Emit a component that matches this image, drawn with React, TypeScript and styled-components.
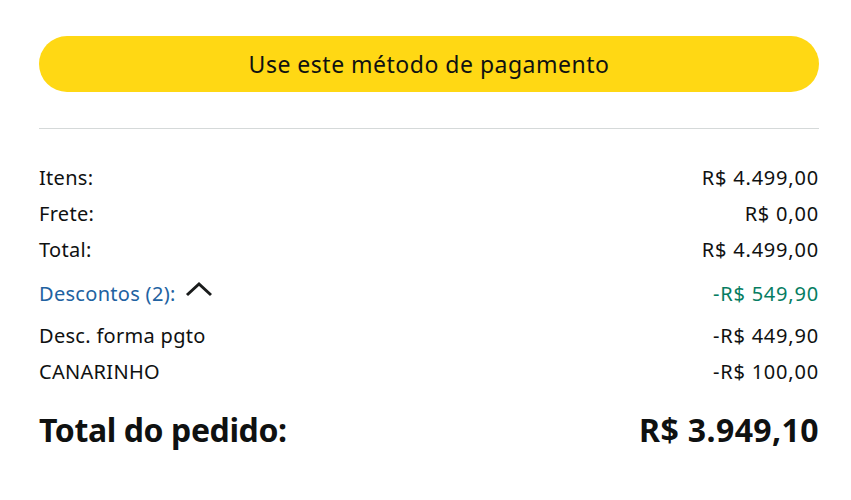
import styled, { createGlobalStyle } from 'styled-components';

const GlobalStyle = createGlobalStyle`
  body {
    margin: 0;
    background: #fff;
    font-family: "Noto Sans", "Open Sans", Arial, sans-serif;
    color: #0f1111;
  }
`;

const Panel = styled.div`
  width: 780px;
  padding: 36px 0 0 39px;
  display: flex;
  flex-direction: column;
`;

const PayButton = styled.button`
  height: 56px;
  width: 100%;
  border: none;
  border-radius: 28px;
  background: #ffd814;
  font-family: inherit;
  font-size: 23px;
  letter-spacing: 0.5px;
  color: #0f1111;
  cursor: pointer;
`;

const Divider = styled.hr`
  border: none;
  border-top: 1px solid #d5d9d9;
  margin: 36px 0 30px;
`;

const Row = styled.div<{ $gap?: number }>`
  display: flex;
  justify-content: space-between;
  align-items: center;
  height: 36px;
  font-size: 20px;
  letter-spacing: 0.3px;
  margin-top: ${({ $gap }) => $gap ?? 0}px;
`;

const Label = styled.span<{ $link?: boolean }>`
  display: flex;
  align-items: center;
  gap: 9px;
  color: ${({ $link }) => ($link ? '#2162a1' : 'inherit')};
`;

const Amount = styled.span<{ $green?: boolean }>`
  letter-spacing: 0.8px;
  color: ${({ $green }) => ($green ? '#067d62' : 'inherit')};
`;

const TotalRow = styled.div`
  display: flex;
  justify-content: space-between;
  align-items: center;
  margin-top: 19px;
  font-size: 32px;
  font-weight: 700;
`;

const TotalLabel = styled.span`
  letter-spacing: -0.4px;
`;

const TotalAmount = styled.span`
  letter-spacing: 0.4px;
`;

const Chevron = () => (
  <svg width="28" height="18" viewBox="0 0 28 18" style={{ marginTop: -6 }}>
    <path d="M2 14 L14 3 L26 14" fill="none" stroke="#1a1c1c" strokeWidth="3" />
  </svg>
);

export default function App() {
  return (
    <>
      <GlobalStyle />
      <Panel>
        <PayButton>Use este método de pagamento</PayButton>
        <Divider />
        <Row>
          <Label>Itens:</Label>
          <Amount>R$ 4.499,00</Amount>
        </Row>
        <Row>
          <Label>Frete:</Label>
          <Amount>R$ 0,00</Amount>
        </Row>
        <Row>
          <Label>Total:</Label>
          <Amount>R$ 4.499,00</Amount>
        </Row>
        <Row $gap={8}>
          <Label $link>
            Descontos (2): <Chevron />
          </Label>
          <Amount $green>-R$ 549,90</Amount>
        </Row>
        <Row $gap={6}>
          <Label>Desc. forma pgto</Label>
          <Amount>-R$ 449,90</Amount>
        </Row>
        <Row>
          <Label>CANARINHO</Label>
          <Amount>-R$ 100,00</Amount>
        </Row>
        <TotalRow>
          <TotalLabel>Total do pedido:</TotalLabel>
          <TotalAmount>R$ 3.949,10</TotalAmount>
        </TotalRow>
      </Panel>
    </>
  );
}
